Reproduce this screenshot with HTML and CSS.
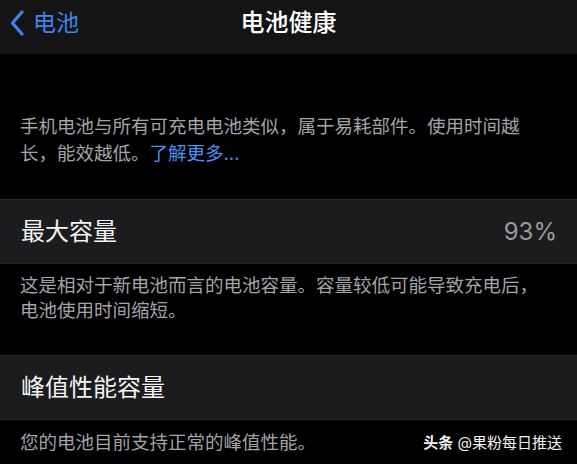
FILE: index.html
```html
<!DOCTYPE html>
<html lang="zh-CN">
<head>
<meta charset="utf-8">
<title>电池健康</title>
<link rel="stylesheet" href="styles.css">
</head>
<body>
  <header class="navbar">
    <a class="nav-back" href="#">
      <svg class="chevron" width="14" height="26" viewBox="0 0 14 26" aria-hidden="true">
        <path d="M12 2 L2.5 13 L12 24" fill="none" stroke="currentColor" stroke-width="3.2" stroke-linecap="round" stroke-linejoin="round"/>
      </svg>
      <span>电池</span>
    </a>
    <h1 class="nav-title">电池健康</h1>
    <span class="nav-spacer"></span>
  </header>

  <main class="settings">
    <p class="intro">手机电池与所有可充电电池类似，属于易耗部件。使用时间越<br>长，能效越低。<a class="link" href="#">了解更多...</a></p>

    <section class="group">
      <div class="cell">
        <span class="cell-label">最大容量</span>
        <span class="cell-value">93%</span>
      </div>
    </section>
    <p class="footnote">这是相对于新电池而言的电池容量。容量较低可能导致充电后，<br>电池使用时间缩短。</p>

    <section class="group">
      <div class="cell">
        <span class="cell-label">峰值性能容量</span>
      </div>
    </section>
    <div class="footnote footnote-last">
      <span>您的电池目前支持正常的峰值性能。</span>
      <span class="mark"><b>头条</b> @果粉每日推送</span>
    </div>
  </main>
</body>
</html>
```

FILE: styles.css
```css
* {
  box-sizing: border-box;
}

html, body {
  margin: 0;
  padding: 0;
  background: #000;
}

body {
  width: 577px;
  height: 464px;
  overflow: hidden;
  font-family: "Inter", "Noto Sans CJK SC", sans-serif;
  color: #fff;
}

/* top navigation bar */
.navbar {
  height: 54px;
  background: #141414;
  display: grid;
  grid-template-columns: 1fr auto 1fr;
  align-items: center;
  padding: 0 0 0 10px;
}

.nav-back {
  display: flex;
  align-items: center;
  gap: 9px;
  color: #3f84ee;
  text-decoration: none;
  font-size: 23px;
  line-height: 1;
  margin-top: -8px;
}

.chevron {
  display: block;
}

.nav-title {
  margin: -8px 0 0;
  font-size: 24px;
  font-weight: 500;
  line-height: 1;
  color: #fff;
  transform: translateX(-5px);
}

/* grouped list */
.intro {
  margin: 0;
  padding: 59px 20px 0;
  height: 145px;
  font-size: 18.5px;
  line-height: 27px;
  color: #a3a3a8;
}

.link {
  color: #4b8ff2;
  text-decoration: none;
}

.group {
  background: #1c1c1e;
  border-top: 1px solid #2a2a2c;
  border-bottom: 1px solid #262628;
}

.cell {
  height: 63px;
  display: flex;
  align-items: center;
  justify-content: space-between;
  padding: 0 20px 0 21px;
}

.cell-label {
  font-size: 24px;
  line-height: 1;
  color: #f4f4f4;
}

.cell-value {
  font-size: 24px;
  line-height: 1;
  color: #9a9a9f;
}

.footnote {
  margin: 0;
  padding: 9px 20px 0;
  height: 91px;
  font-size: 18.5px;
  line-height: 25px;
  color: #a3a3a8;
}

.footnote-last {
  height: auto;
  padding-top: 10px;
  display: flex;
  justify-content: space-between;
  align-items: center;
}

.mark {
  font-size: 15px;
  color: #f2f2f2;
  margin-right: -5px;
}

.mark b {
  font-weight: 700;
}
```
